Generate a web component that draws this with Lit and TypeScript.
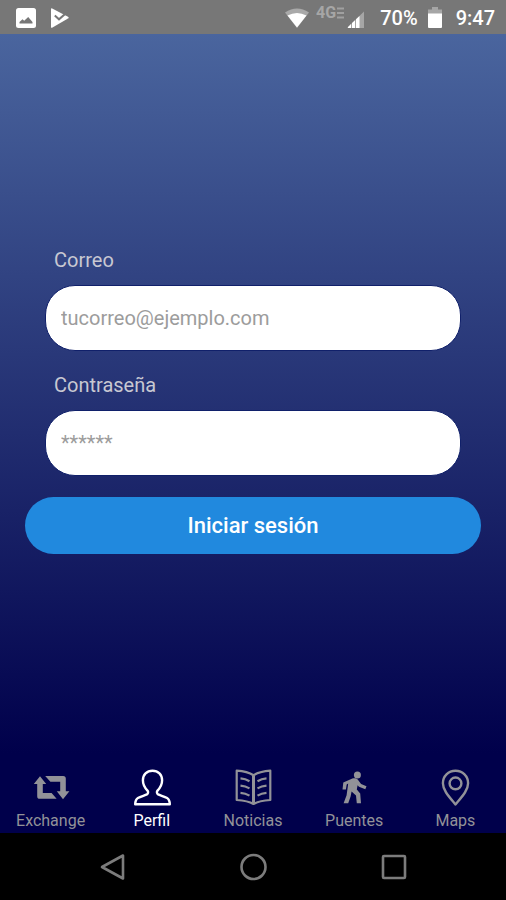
import { LitElement, html, svg, css } from "lit";
import { customElement, state } from "lit/decorators.js";

const exchangeIcon = svg`
  <path fill="currentColor" d="M9 9.200 15.200 17h-3.400v9h8.800l5 5.800H8.800A2.600 2.600 0 0 1 6.200 29.200V17H2.800z"/>
  <path fill="currentColor" d="M14.200 9h18a2.600 2.600 0 0 1 2.600 2.600v12.600h3.600L32 32.200l-6.200-8h3.400v-9.400h-9.800z"/>`;

const profileIcon = svg`
  <path fill="none" stroke="currentColor" stroke-width="2.400" stroke-linejoin="round"
    d="M20.500 3.800c-5.700 0-9.600 4-9.600 9.400 0 4.600 2 7.700 4.600 10.400.9 1 .8 3-.6 3.800-2 1-6.500 2.200-9 3.600-2 1.200-2.600 3.200-2.700 6.200h34.600c-.1-3-.7-5-2.700-6.200-2.500-1.400-7-2.600-9-3.600-1.400-.8-1.500-2.800-.6-3.800 2.600-2.700 4.600-5.800 4.600-10.400 0-5.400-3.900-9.400-9.600-9.400z"/>`;

const newsIcon = svg`
  <g fill="none" stroke="currentColor" stroke-width="2.200" stroke-linejoin="round">
    <path d="M20.500 8.200C15.500 5 10.500 4.100 3.700 3.600v29.400C10.500 33.400 15.500 34 20.500 37c5-3 10-3.600 16.800-4V3.600C30.500 4.100 25.500 5 20.500 8.200z"/>
    <path stroke-width="3" d="M20.500 8.200v28"/>
    <path d="M7.500 11.400q5 .4 9 2.800M7.500 18.600q5 .4 9 2.800M7.500 25.800q5 .4 9 2.800M33.500 11.400q-5 .4-9 2.800M33.500 18.600q-5 .4-9 2.800M33.500 25.800q-5 .4-9 2.800"/>
  </g>`;

const walkIcon = svg`
  <circle cx="23.400" cy="8" r="3.500" fill="currentColor"/>
  <path fill="currentColor" d="M17.800 11.800c2-.8 4.600-.6 5.900.8l3.400 4.400 5.400 2.200-1.200 3-6.300-2.400-1.400-1.600-.8 4.400 3.400 4 .8 9.600h-4.200l-.8-7.800-4.400-3.800-1 5-2.400 6.600h-4.600l3-8 1.600-11.600-1.500.9-.8 5h-3.400l.8-7z"/>`;

const mapsIcon = svg`
  <g fill="none" stroke="currentColor" stroke-width="2.400" stroke-linejoin="round">
    <path d="M20.500 3.800c-7.200 0-12.600 5.500-12.600 12.400 0 7.400 6.800 14.200 12.600 21.200 5.800-7 12.600-13.800 12.600-21.200C33.100 9.300 27.700 3.800 20.500 3.800z"/>
    <circle cx="20.500" cy="16.400" r="5.900"/>
  </g>`;

const tabs = [
  { id: "exchange", label: "Exchange", icon: exchangeIcon },
  { id: "perfil", label: "Perfil", icon: profileIcon },
  { id: "noticias", label: "Noticias", icon: newsIcon },
  { id: "puentes", label: "Puentes", icon: walkIcon },
  { id: "maps", label: "Maps", icon: mapsIcon },
];

@customElement("status-bar")
class StatusBar extends LitElement {
  static styles = css`
    :host {
      display: flex;
      align-items: center;
      justify-content: space-between;
      height: 34px;
      padding: 2px 11px 0 16px;
      box-sizing: border-box;
      background: #777777;
      color: #ffffff;
      font-size: 20px;
      line-height: 24px;
      font-weight: 500;
    }
    .group {
      display: flex;
      align-items: center;
    }
    .left {
      gap: 14px;
    }
    .network {
      display: flex;
      align-items: flex-start;
      height: 26px;
      margin: 0 3px 0 7px;
      color: #a6a6a6;
      font-size: 16px;
      line-height: 16px;
      font-weight: 700;
    }
    .charge {
      margin: 0 10px 0 15px;
    }
    .clock {
      margin-left: 14px;
    }
    svg {
      display: block;
    }
  `;

  render() {
    return html`
      <div class="group left">
        <svg width="20" height="20" viewBox="0 0 20 20" aria-hidden="true">
          <rect width="20" height="20" rx="2.500" fill="#fff" />
          <path d="M3.500 15.500v-1.500l3-2.800 1.700 1.600 4-3.800 4.300 5v1.500z" fill="#777" />
        </svg>
        <svg width="20" height="20" viewBox="0 0 20 20" aria-hidden="true">
          <path d="M1 1.200Q1 0 2.200.5L18 8.800q1.400.8 0 1.700L2.500 19.600Q1 20.300 1 18.900z" fill="#fff" />
          <path d="M4.800 7.600 9 11.300 18.500 3" fill="none" stroke="#777" stroke-width="2" />
        </svg>
      </div>
      <div class="group">
        <svg width="24" height="20" viewBox="0 0 24 20" aria-hidden="true">
          <path d="M0 4.500Q12-3.500 24 4.500L12 20z" fill="#a9a9a9" />
          <path d="M2.500 7.500Q12 2.500 21.500 7.500L12 19.500z" fill="#fff" />
        </svg>
        <span class="network">
          <span>4G</span>
          <svg width="8" height="14" viewBox="0 0 8 14" aria-hidden="true">
            <path d="M1 3.500h7M1 8h7M1 12.500h7" stroke="#a0a0a0" stroke-width="2" />
          </svg>
        </span>
        <svg width="18" height="22" viewBox="0 0 18 22" aria-hidden="true">
          <path d="M0 21 17 4.500V21z" fill="#a6a6a6" />
          <path d="M1 21v-1l3-2.900V21zM5 21v-4.900l3-2.900V21zM9 21v-8.700l3.500-3.400V21z" fill="#fff" />
        </svg>
        <span class="charge">70%</span>
        <svg width="14" height="22" viewBox="0 0 14 22" aria-hidden="true">
          <path d="M4 0h6v2.500h4V8H0V2.500h4z" fill="#a6a6a6" />
          <path d="M0 6.500h14V20q0 1-1 1H1q-1 0-1-1z" fill="#fff" />
        </svg>
        <span class="clock">9:47</span>
      </div>
    `;
  }
}

@customElement("login-form")
class LoginForm extends LitElement {
  static styles = css`
    :host {
      display: block;
    }
    .form {
      display: flex;
      flex-direction: column;
      gap: 21px;
      padding: 0 25px;
    }
    .field {
      display: flex;
      flex-direction: column;
      gap: 12px;
      margin: 0 20px;
    }
    label {
      padding-left: 9px;
      color: #c8c8d2;
      font-size: 20px;
      line-height: 26px;
    }
    input {
      box-sizing: border-box;
      width: 100%;
      height: 66px;
      padding: 0 15px;
      border: 1px solid #10206a;
      border-radius: 30px;
      background: #ffffff;
      color: #222222;
      font: inherit;
      font-size: 20px;
      outline: none;
    }
    input::placeholder {
      color: #9c9c9c;
      opacity: 1;
    }
    .submit {
      height: 57px;
      padding: 0;
      border: 0;
      border-radius: 29px;
      background: #2189de;
      color: #ffffff;
      font: inherit;
      font-size: 22px;
      font-weight: 500;
    }
  `;

  render() {
    return html`
      <form class="form" @submit=${(e: Event) => e.preventDefault()}>
        <div class="field">
          <label for="email">Correo</label>
          <input id="email" type="email" placeholder="tucorreo@ejemplo.com" />
        </div>
        <div class="field">
          <label for="password">Contraseña</label>
          <input id="password" type="password" placeholder="******" />
        </div>
        <button class="submit" type="submit">Iniciar sesión</button>
      </form>
    `;
  }
}

@customElement("app-root")
class AppRoot extends LitElement {
  static styles = css`
    :host {
      display: flex;
      flex-direction: column;
      min-height: 100vh;
      font-family: Roboto, "Noto Sans", sans-serif;
      background: #00004b;
    }
    .screen {
      flex: 1;
      display: flex;
      flex-direction: column;
      background: linear-gradient(#4a659e 0%, #00004b 90%);
    }
    .content {
      flex: 1;
      display: flex;
      flex-direction: column;
      justify-content: center;
    }
    .tabs {
      display: grid;
      grid-template-columns: repeat(5, 1fr);
      height: 66px;
    }
    .tab {
      display: flex;
      flex-direction: column;
      align-items: center;
      gap: 4px;
      padding: 0;
      border: 0;
      background: none;
      color: #929298;
      font: inherit;
      font-size: 16px;
      line-height: 20px;
    }
    .tab.active {
      color: #ffffff;
    }
    .system {
      display: grid;
      grid-template-columns: repeat(3, 1fr);
      height: 67px;
      padding: 0 42px;
      background: #000000;
    }
    .key {
      display: flex;
      align-items: center;
      justify-content: center;
      padding: 0;
      border: 0;
      background: none;
      color: #7c7c7c;
    }
    svg {
      display: block;
    }
  `;

  @state() private active = "perfil";

  render() {
    return html`
      <status-bar></status-bar>
      <div class="screen">
        <main class="content"><login-form></login-form></main>
        <nav class="tabs">
          ${tabs.map(
            (tab) => html`
              <button
                class="tab ${tab.id === this.active ? "active" : ""}"
                type="button"
                @click=${() => (this.active = tab.id)}
              >
                <svg width="40" height="40" viewBox="0 0 40 40" aria-hidden="true">${tab.icon}</svg>
                <span>${tab.label}</span>
              </button>
            `
          )}
        </nav>
      </div>
      <div class="system">
        <button class="key" type="button" aria-label="Atrás">
          <svg width="28" height="28" viewBox="0 0 28 28">
            <path d="M25 2.500v23L4 14z" fill="none" stroke="currentColor" stroke-width="2.600" stroke-linejoin="round" />
          </svg>
        </button>
        <button class="key" type="button" aria-label="Inicio">
          <svg width="28" height="28" viewBox="0 0 28 28">
            <circle cx="14.500" cy="14" r="12" fill="none" stroke="currentColor" stroke-width="2.600" />
          </svg>
        </button>
        <button class="key" type="button" aria-label="Recientes">
          <svg width="28" height="28" viewBox="0 0 28 28">
            <rect x="3" y="3" width="22" height="22" rx="1" fill="none" stroke="currentColor" stroke-width="2.600" />
          </svg>
        </button>
      </div>
    `;
  }
}
